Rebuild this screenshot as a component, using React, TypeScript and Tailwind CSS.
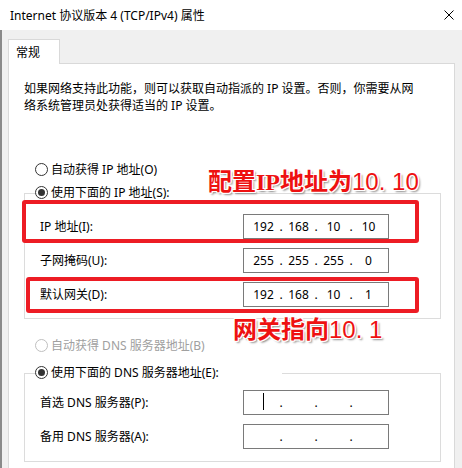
import React, { Fragment } from "react";

function Radio({ checked, disabled }: { checked?: boolean; disabled?: boolean }) {
  return (
    <span
      className={`flex h-[13px] w-[13px] shrink-0 items-center justify-center rounded-full border bg-white ${
        disabled ? "border-[#bfbfbf]" : "border-[#333333]"
      }`}
    >
      {checked && <span className="h-[7px] w-[7px] rounded-full bg-[#333333]" />}
    </span>
  );
}

function RadioRow({ label, checked, disabled }: { label: string; checked?: boolean; disabled?: boolean }) {
  return (
    <div className={`flex h-[17px] items-center gap-[3px] ${disabled ? "text-[#a0a0a0]" : "text-black"}`}>
      <Radio checked={checked} disabled={disabled} />
      <span className="leading-[17px]">{label}</span>
    </div>
  );
}

function IPBox({ values, cursor }: { values: string[]; cursor?: boolean }) {
  return (
    <div className="relative flex h-[25px] w-[146px] items-center border border-[#7a7a7a] bg-white pl-[4px]">
      {values.map((v, i) => (
        <Fragment key={i}>
          <span className="w-[31px] text-center leading-[17px]">{v}</span>
          {i < 3 && <span className="w-[4px] text-center leading-[17px]">.</span>}
        </Fragment>
      ))}
      {cursor && <span className="absolute left-[19px] top-[2px] h-[17px] w-px bg-black" />}
    </div>
  );
}

function FieldRow({ label, values, cursor }: { label: string; values: string[]; cursor?: boolean }) {
  return (
    <div className="flex h-[25px] items-center">
      <span className="w-[203px] leading-[17px]">{label}</span>
      <IPBox values={values} cursor={cursor} />
    </div>
  );
}

const shadow =
  "[text-shadow:-1px_-1px_0_#fff,1px_-1px_0_#fff,-1px_1px_0_#fff,1px_1px_0_#fff,0_1px_0_#fff,1px_0_0_#fff,2px_2px_2px_#8a8a8a]";

export default function App() {
  return (
    <div className="relative h-[468px] w-[462px] overflow-hidden bg-[#f0f0f0] font-['Noto_Sans','Noto_Sans_CJK_SC',sans-serif] text-[12px] text-black">
      {/* title bar */}
      <div className="flex h-[30px] items-center justify-between bg-white pl-[10px] pr-[8px]">
        <span className="leading-[17px]">Internet 协议版本 4 (TCP/IPv4) 属性</span>
        <svg width="10" height="10" viewBox="0 0 10 10" className="block">
          <path d="M0.5 0.5 L9.5 9.5 M9.5 0.5 L0.5 9.5" stroke="#000" strokeWidth="1" fill="none" />
        </svg>
      </div>

      {/* body */}
      <div className="h-[438px] border-l-2 border-[#8a8a8a] pl-[6px] pr-[7px] pt-[9px]">
        <div className="relative z-10 -mb-px flex h-[25px] w-[52px] items-center border border-b-0 border-[#d9d9d9] bg-white pl-[7px]">
          <span className="leading-[17px]">常规</span>
        </div>
        <div className="h-[420px] border border-[#d9d9d9] bg-white pl-[15px] pr-[13px] pt-[16px]">
          <p className="leading-[17px]">
            如果网络支持此功能，则可以获取自动指派的 IP 设置。否则，你需要从网
            <br />
            络系统管理员处获得适当的 IP 设置。
          </p>

          <div className="mt-[47px] pl-[11px]">
            <RadioRow label="自动获得 IP 地址(O)" />
          </div>

          <div className="relative mt-[15px] w-[417px] border border-[#dcdcdc] pb-[11px] pl-[15px] pt-[20px]">
            <div className="absolute -top-[10px] left-[10px] w-[200px] bg-white">
              <RadioRow label="使用下面的 IP 地址(S):" checked />
            </div>
            <div className="flex flex-col gap-[9px]">
              <FieldRow label="IP 地址(I):" values={["192", "168", "10", "10"]} />
              <FieldRow label="子网掩码(U):" values={["255", "255", "255", "0"]} />
              <FieldRow label="默认网关(D):" values={["192", "168", "10", "1"]} />
            </div>
          </div>

          <div className="mt-[18px] pl-[11px]">
            <RadioRow label="自动获得 DNS 服务器地址(B)" disabled />
          </div>

          <div className="relative mt-[19px] w-[417px] border border-[#dcdcdc] pb-[12px] pl-[15px] pt-[16px]">
            <div className="absolute -top-[10px] left-[10px] w-[247px] bg-white">
              <RadioRow label="使用下面的 DNS 服务器地址(E):" checked />
            </div>
            <div className="flex flex-col gap-[9px]">
              <FieldRow label="首选 DNS 服务器(P):" values={["", "", "", ""]} cursor />
              <FieldRow label="备用 DNS 服务器(A):" values={["", "", "", ""]} />
            </div>
          </div>
        </div>
      </div>

      {/* annotation overlays */}
      <div className="absolute left-[22px] top-[200px] h-[43px] w-[397px] rounded-[3px] border-4 border-[#ed1c24]" />
      <div className="absolute left-[26px] top-[277px] h-[36px] w-[393px] rounded-[3px] border-4 border-[#ed1c24]" />

      <div
        className={`absolute left-[208px] top-[168px] whitespace-pre font-['Noto_Sans_CJK_SC',sans-serif] text-[24px] font-bold leading-[24px] text-[#ee1111] ${shadow}`}
      >
        配置<span className="font-['Liberation_Serif',serif]">IP</span>地址为
        <span className="font-['Liberation_Sans',sans-serif] font-normal">10. 10</span>
      </div>
      <div
        className={`absolute left-[233px] top-[316px] whitespace-pre font-['Noto_Sans_CJK_SC',sans-serif] text-[24px] font-bold leading-[24px] text-[#ee1111] ${shadow}`}
      >
        网关指向<span className="font-['Liberation_Sans',sans-serif] font-normal">10. 1</span>
      </div>
    </div>
  );
}
